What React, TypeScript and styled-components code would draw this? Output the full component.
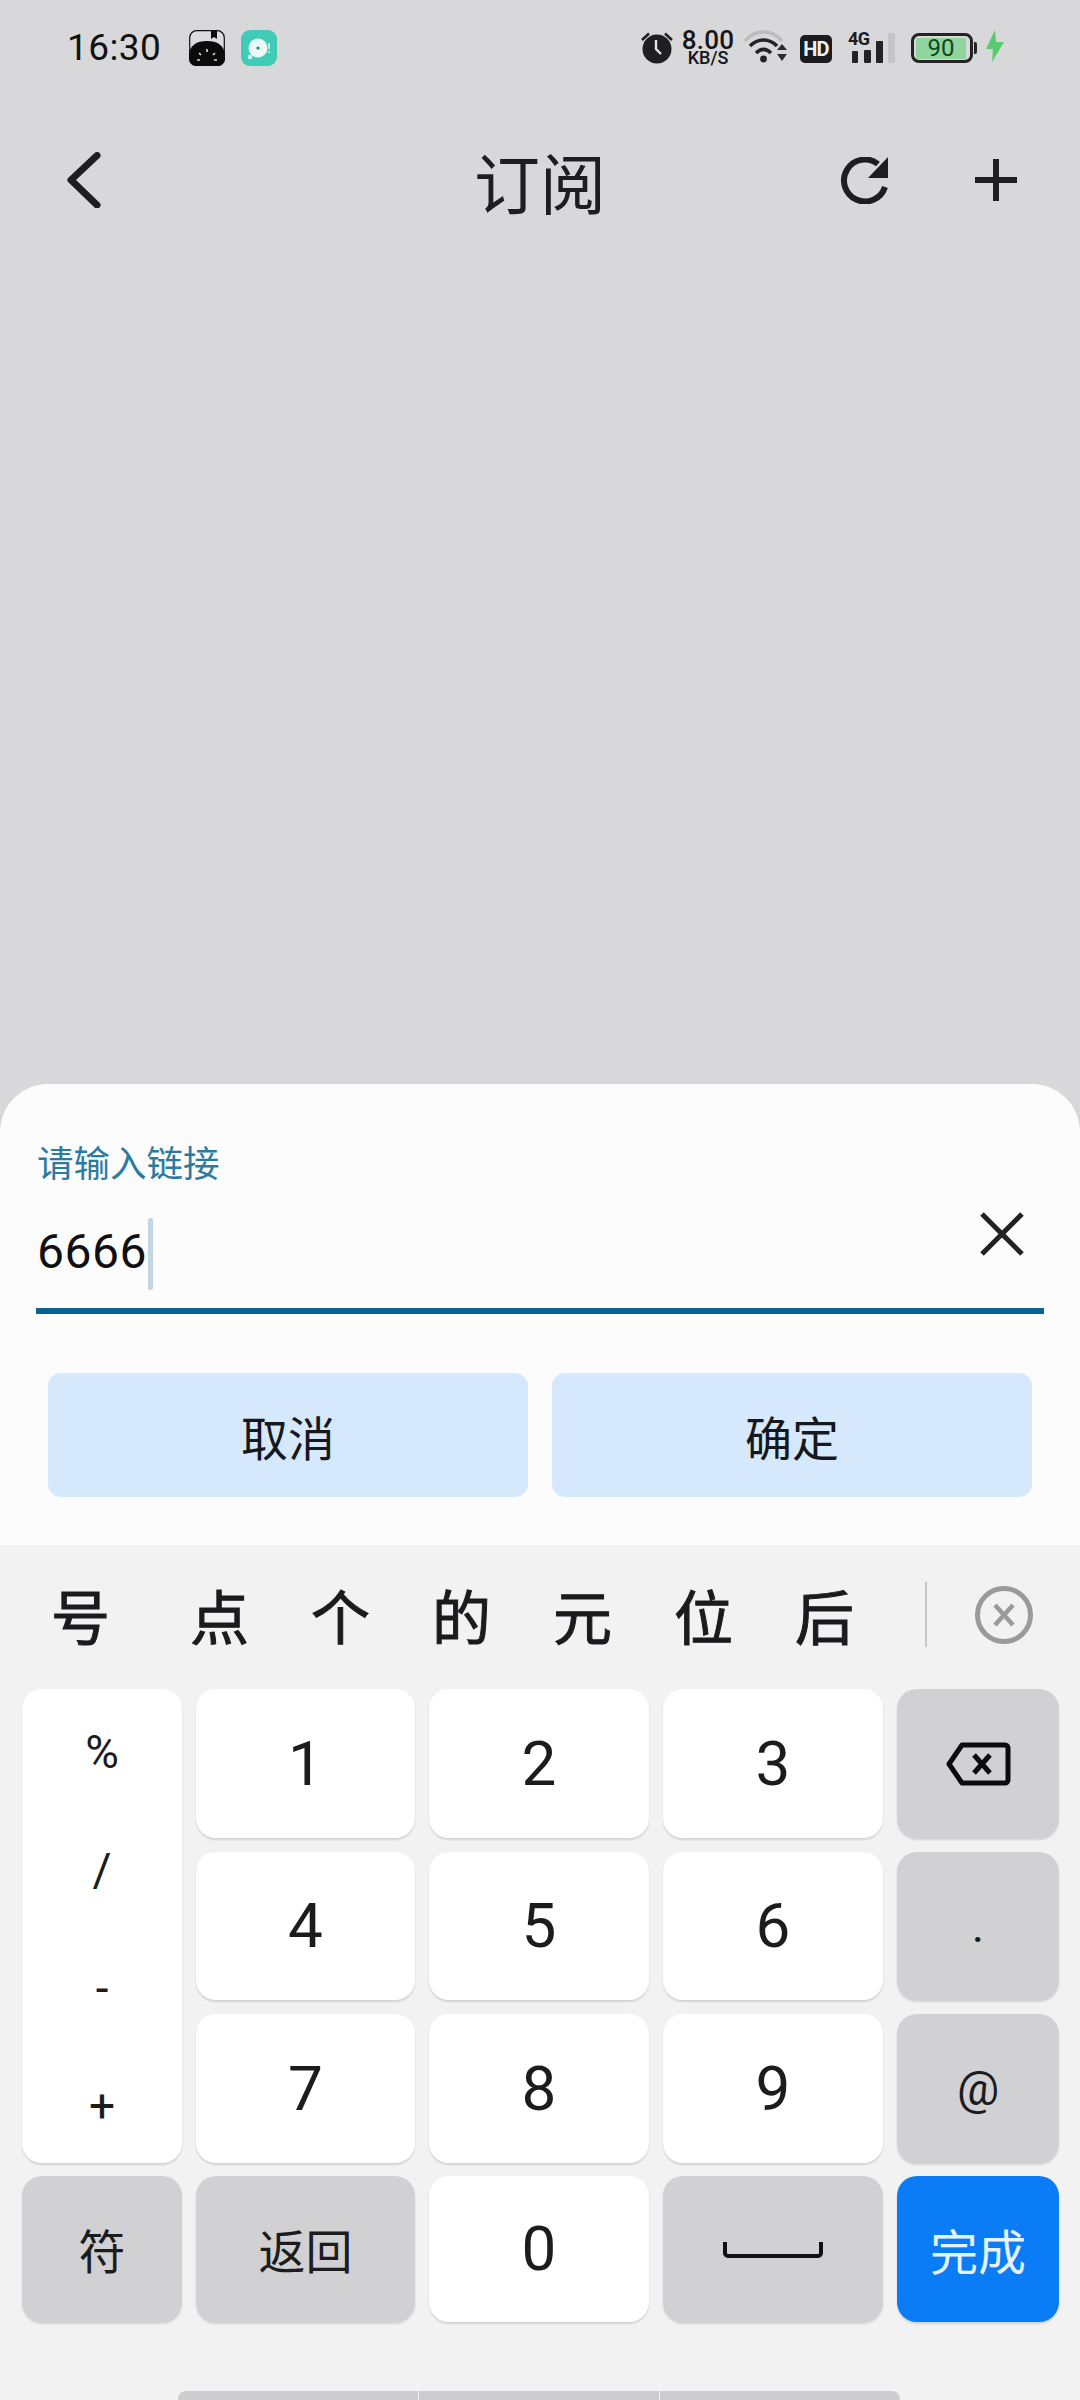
import React from 'react';
import styled, { createGlobalStyle } from 'styled-components';

const Global = createGlobalStyle`
  html, body { margin: 0; padding: 0; background: #d8d7da; }
  * { box-sizing: border-box; }
  body { font-family: Roboto, "Noto Sans CJK SC", sans-serif; }
`;

const Screen = styled.div`
  width: 1080px; height: 2400px; overflow: hidden;
  display: flex; flex-direction: column;
  background: #d8d7da; color: #1b1b1d;
`;

const StatusBar = styled.div`
  height: 96px; flex: none; display: flex; align-items: flex-start;
  padding: 30px 0 0 67px;
`;
const Time = styled.div`
  width: 122px; height: 36px; font-size: 37px; line-height: 36px; color: #111;
  letter-spacing: 0.4px;
`;
const AppIcon = styled.svg`
  width: 36px; height: 36px; margin-right: 16px; flex: none; display: block;
`;
const StatusRight = styled.div`
  margin-left: auto; margin-right: 76px; display: flex; align-items: flex-start;
`;
const StatusIcon = styled.svg<{ $gap: number }>`
  flex: none; display: block; margin-right: ${p => p.$gap}px;
`;
const NetSpeed = styled.div`
  width: 50px; margin-right: 11px; display: flex; flex-direction: column; align-items: center;
  color: #151515; font-weight: 500;
`;
const NetValue = styled.div`
  font-size: 26px; line-height: 20px; letter-spacing: 0.2px; white-space: nowrap;
`;
const NetUnit = styled.div`
  font-size: 18px; line-height: 16px; margin-top: 0; white-space: nowrap;
`;
const HdBadge = styled.div`
  width: 32px; height: 28px; margin: 5px 16px 0 0; border-radius: 5px;
  background: #1c1c1e; color: #efeff0; font-size: 20px; font-weight: 700; line-height: 28px;
  text-align: center; letter-spacing: -0.8px;
`;
const Signal = styled.div`
  position: relative; width: 47px; height: 32px; margin: 1px 16px 0 0;
`;
const SignalLabel = styled.div`
  position: absolute; left: 0; top: -1px; font-size: 18px; line-height: 18px;
  font-weight: 700; color: #1c1c1e; letter-spacing: -0.6px;
`;
const SignalBars = styled.svg`
  width: 47px; height: 32px; display: block;
`;
const Battery = styled.div`
  display: flex; align-items: center; margin: 3px 8px 0 0;
`;
const BatteryShell = styled.div`
  width: 62px; height: 30px; border: 3px solid #232325; border-radius: 8px;
  padding: 1px 0 0 1px; display: flex; align-items: flex-start; justify-content: flex-start;
`;
const BatteryFill = styled.div`
  width: 50px; height: 21px; margin: 1px 0 0 1px; background: #8fd59d;
  color: #0c4a1e; font-size: 24px; line-height: 21px; text-align: center;
`;
const BatteryNub = styled.div`
  width: 3px; height: 12px; margin-left: 1px; border-radius: 0 2px 2px 0; background: #232325;
`;

const Header = styled.div`
  height: 168px; flex: none; display: grid; grid-template-columns: 1fr auto 1fr;
  align-items: center; padding: 0 63px 0 67px;
`;
const BackIcon = styled.svg`
  width: 34px; height: 56px; display: block;
`;
const Title = styled.div`
  font-size: 66px; line-height: 66px; font-family: "Noto Sans CJK SC", sans-serif;
  color: #1e1e20; margin-right: 4px;
`;
const HeaderActions = styled.div`
  display: flex; justify-content: flex-end; align-items: center; gap: 87px;
`;
const ActionIcon = styled.svg`
  display: block; flex: none;
`;

const Spacer = styled.div`
  flex: 1;
`;

const Sheet = styled.div`
  height: 461px; flex: none; background: #fdfcfd; border-radius: 48px 48px 0 0;
  padding: 60px 36px 0; display: flex; flex-direction: column;
`;
const FieldLabel = styled.div`
  font-family: "Noto Sans CJK SC", sans-serif; font-size: 36.5px; line-height: 36px;
  color: #2a7b9d; margin-left: 1px; height: 38px;
`;
const InputRow = styled.div`
  height: 132px; flex: none; display: flex; align-items: flex-start; position: relative;
  border-bottom: 6px solid #0d6190;
`;
const InputText = styled.div`
  font-size: 48px; line-height: 48px; margin: 46px 0 0 1px; color: #101012; letter-spacing: 0.5px;
`;
const Caret = styled.div`
  width: 5px; height: 72px; margin: 36px 0 0 1px; background: #c3d5e4; border-radius: 2px;
`;
const ClearIcon = styled.svg`
  width: 44px; height: 44px; margin: 30px 20px 0 auto; display: block;
`;
const ButtonRow = styled.div`
  display: flex; gap: 24px; padding: 0 12px; margin-top: 59px;
`;
const DialogButton = styled.div`
  flex: 1; height: 124px; border-radius: 13px; background: #d6e8fc;
  display: flex; align-items: center; justify-content: center;
  font-family: "Noto Sans CJK SC", sans-serif; font-size: 47px; color: #16181c;
`;

const Keyboard = styled.div`
  height: 855px; flex: none; background: #f2f2f3; display: flex; flex-direction: column;
  position: relative;
`;
const Candidates = styled.div`
  height: 65px; margin-top: 37px; padding-left: 20px; display: flex; align-items: center;
  flex: none;
`;
const Candidate = styled.div`
  width: 121px; text-align: center; font-family: "Noto Sans CJK SC", sans-serif;
  font-size: 59px; line-height: 65px; font-weight: 400; color: #1b1b1d;
  -webkit-text-stroke: 1px #1b1b1d;
  &:first-child { margin-right: 18px; }
`;
const CandidateDivider = styled.div`
  width: 2px; height: 65px; background: #c6c6c8; margin-left: 40px;
`;
const CandidateClose = styled.svg`
  width: 60px; height: 60px; display: block; margin-left: 47px;
`;

const KeyGrid = styled.div`
  margin: 42px 0 0 22px; display: grid; flex: none;
  grid-template-columns: 160px 219px 220px 220px 162px;
  grid-template-rows: 149px 148.5px 149px 145.5px;
  column-gap: 14px; row-gap: 13.5px;
`;
const keyFontSize = { digit: '62px', fn: '47px', go: '48px' };
const Key = styled.div<{ $kind: 'digit' | 'fn' | 'go' }>`
  border-radius: 20px;
  display: flex; align-items: center; justify-content: center;
  box-shadow: 0 2px 2px rgba(0, 0, 0, 0.13);
  background: ${p => (p.$kind === 'fn' ? '#d1d1d4' : p.$kind === 'go' ? '#0a7df6' : '#ffffff')};
  color: ${p => (p.$kind === 'go' ? '#e6f3ff' : '#1c1c1e')};
  font-size: ${p => keyFontSize[p.$kind]};
  font-family: Roboto, "Noto Sans CJK SC", sans-serif;
`;
const SymbolKey = styled.div`
  grid-row: span 3; border-radius: 20px; background: #fff;
  box-shadow: 0 2px 2px rgba(0, 0, 0, 0.13);
  padding-top: 4px; display: grid; grid-auto-rows: 118px;
  overflow: hidden;
`;
const Symbol = styled.div`
  display: flex; align-items: center; justify-content: center;
  font-size: 46px; color: #1c1c1e;
`;
const BackspaceIcon = styled.svg`
  width: 66px; height: 46px; display: block;
`;
const SpaceIcon = styled.svg`
  width: 100px; height: 18px; display: block; margin-top: 2px;
`;

const NavRow = styled.div`
  position: absolute; left: 178px; bottom: 0; display: flex; gap: 1px;
`;
const NavSegment = styled.div`
  height: 9px; width: 240px; background: #cdcdcf;
  &:first-child { border-radius: 8px 0 0 0; }
  &:last-child { border-radius: 0 8px 0 0; }
`;

const digits = [
  ['1', '2', '3'],
  ['4', '5', '6'],
  ['7', '8', '9'],
];

function BackspaceGlyph() {
  return (
    <BackspaceIcon viewBox="0 0 66 46">
      <path d="M17 4 H60 a3 3 0 0 1 3 3 V39 a3 3 0 0 1 -3 3 H17 L4 23 Z" fill="none" stroke="#0c0c0e" strokeWidth="5" strokeLinejoin="round" />
      <path d="M29 14 L45 32 M45 14 L29 32" stroke="#0c0c0e" strokeWidth="5" fill="none" />
    </BackspaceIcon>
  );
}

export default function App() {
  const fnKeys: React.ReactNode[] = [<BackspaceGlyph key="b" />, '.', '@'];
  return (
    <Screen>
      <Global />
      <StatusBar>
        <Time>16:30</Time>
        <AppIcon viewBox="0 0 36 36">
          <rect x="0.7" y="0.7" width="34.6" height="34.6" rx="7" fill="#dcdbde" stroke="#111" strokeWidth="1.2" />
          <path d="M0 34 V26 C0 15 8 11 18 11 C28 11 36 15 36 26 V29 a7 7 0 0 1 -7 7 H7 a7 7 0 0 1 -7 -7 Z" fill="#0b0b0c" />
          <path d="M22 1 H28 V9 L25 7 L22 9 Z" fill="#0b0b0c" />
          <path d="M18 19 V22 M10 23 L12 25 M26 23 L24 25 M8 30 L11 30 M28 30 L25 30" stroke="#dcdbde" strokeWidth="1.6" />
        </AppIcon>
        <AppIcon viewBox="0 0 36 36">
          <rect width="36" height="36" rx="9" fill="#3fcbb5" />
          <circle cx="17" cy="18" r="9.5" fill="#eafaf7" />
          <circle cx="17" cy="18" r="1.6" fill="#23806f" />
          <circle cx="9" cy="27" r="2.2" fill="#d5f5ef" />
          <path d="M28 13 V19 M28 21 V23" stroke="#e6f8f5" strokeWidth="1.4" />
        </AppIcon>
        <StatusRight>
          <StatusIcon $gap={10} width="32" height="34" viewBox="0 0 32 34">
            <circle cx="16" cy="19" r="14.5" fill="#1f1f21" />
            <path d="M1 10 L8 3.5 M31 10 L24 3.5" stroke="#1f1f21" strokeWidth="2.6" />
            <path d="M15 10 V19 L20 24" stroke="#e4e4e6" strokeWidth="2.4" fill="none" />
          </StatusIcon>
          <NetSpeed>
            <NetValue>8.00</NetValue>
            <NetUnit>KB/S</NetUnit>
          </NetSpeed>
          <StatusIcon $gap={13} width="43" height="34" viewBox="0 0 43 34">
            <path d="M1 11 C11 -1 28 -1 38 11" fill="none" stroke="#bcbcbe" strokeWidth="3.4" />
            <path d="M6 16 C14 8 25 8 33 16" fill="none" stroke="#232325" strokeWidth="3.6" />
            <path d="M12 23 C17 18 22 18 27 23" fill="none" stroke="#232325" strokeWidth="3.6" />
            <circle cx="19.5" cy="29" r="3.4" fill="#232325" />
            <path d="M33 20 L38 14 L43 20 Z M33 24 L43 24 L38 31 Z" fill="#2c2c2e" />
          </StatusIcon>
          <HdBadge>HD</HdBadge>
          <Signal>
            <SignalLabel>4G</SignalLabel>
            <SignalBars viewBox="0 0 47 32">
              <rect x="4" y="20" width="6" height="12" rx="1" fill="#232325" />
              <rect x="16" y="19" width="7" height="13" rx="1" fill="#232325" />
              <rect x="28" y="10" width="7" height="22" rx="1" fill="#232325" />
              <rect x="40" y="2" width="7" height="30" rx="1" fill="#c4c4c6" />
            </SignalBars>
          </Signal>
          <Battery>
            <BatteryShell>
              <BatteryFill>90</BatteryFill>
            </BatteryShell>
            <BatteryNub />
          </Battery>
          <StatusIcon $gap={0} width="19" height="32" viewBox="0 0 19 32">
            <path d="M10 0 L1 19 H8 L7 32 L19 12 H11 Z" fill="#58c96d" />
          </StatusIcon>
        </StatusRight>
      </StatusBar>

      <Header>
        <BackIcon viewBox="0 0 34 56">
          <path d="M30 3.5 L4 28 L30 53" fill="none" stroke="#1e1e20" strokeWidth="7" strokeLinecap="round" strokeLinejoin="round" />
        </BackIcon>
        <Title>订阅</Title>
        <HeaderActions>
          <ActionIcon width="48" height="47" viewBox="0 0 48 47">
            <path d="M38 7 A21 21 0 1 0 45 30" fill="none" stroke="#1e1e20" strokeWidth="6" />
            <path d="M48 0 V21 H28 Z" fill="#1e1e20" />
          </ActionIcon>
          <ActionIcon width="42" height="42" viewBox="0 0 42 42">
            <path d="M21 0 V42 M0 21 H42" stroke="#1e1e20" strokeWidth="6" />
          </ActionIcon>
        </HeaderActions>
      </Header>

      <Spacer />

      <Sheet>
        <FieldLabel>请输入链接</FieldLabel>
        <InputRow>
          <InputText>6666</InputText>
          <Caret />
          <ClearIcon viewBox="0 0 44 44">
            <path d="M2 2 L42 42 M42 2 L2 42" stroke="#222224" strokeWidth="5" />
          </ClearIcon>
        </InputRow>
        <ButtonRow>
          <DialogButton>取消</DialogButton>
          <DialogButton>确定</DialogButton>
        </ButtonRow>
      </Sheet>

      <Keyboard>
        <Candidates>
          {['号', '点', '个', '的', '元', '位', '后'].map(c => (
            <Candidate key={c}>{c}</Candidate>
          ))}
          <CandidateDivider />
          <CandidateClose viewBox="0 0 60 60">
            <circle cx="30" cy="30" r="26.5" fill="none" stroke="#9a9a9c" strokeWidth="5" />
            <path d="M21 20 L39 40 M39 20 L21 40" stroke="#9a9a9c" strokeWidth="4.5" />
          </CandidateClose>
        </Candidates>
        <KeyGrid>
          <SymbolKey>
            {['%', '/', '-', '+'].map(s => (
              <Symbol key={s}>{s}</Symbol>
            ))}
          </SymbolKey>
          {digits.map((row, i) => (
            <React.Fragment key={i}>
              {row.map(d => (
                <Key $kind="digit" key={d}>{d}</Key>
              ))}
              <Key $kind="fn">{fnKeys[i]}</Key>
            </React.Fragment>
          ))}
          <Key $kind="fn">符</Key>
          <Key $kind="fn">返回</Key>
          <Key $kind="digit">0</Key>
          <Key $kind="fn">
            <SpaceIcon viewBox="0 0 100 18">
              <path d="M2 1 V12 a3 3 0 0 0 3 3 H95 a3 3 0 0 0 3 -3 V1" fill="none" stroke="#111" strokeWidth="4" />
            </SpaceIcon>
          </Key>
          <Key $kind="go">完成</Key>
        </KeyGrid>
        <NavRow>
          <NavSegment />
          <NavSegment />
          <NavSegment />
        </NavRow>
      </Keyboard>
    </Screen>
  );
}
